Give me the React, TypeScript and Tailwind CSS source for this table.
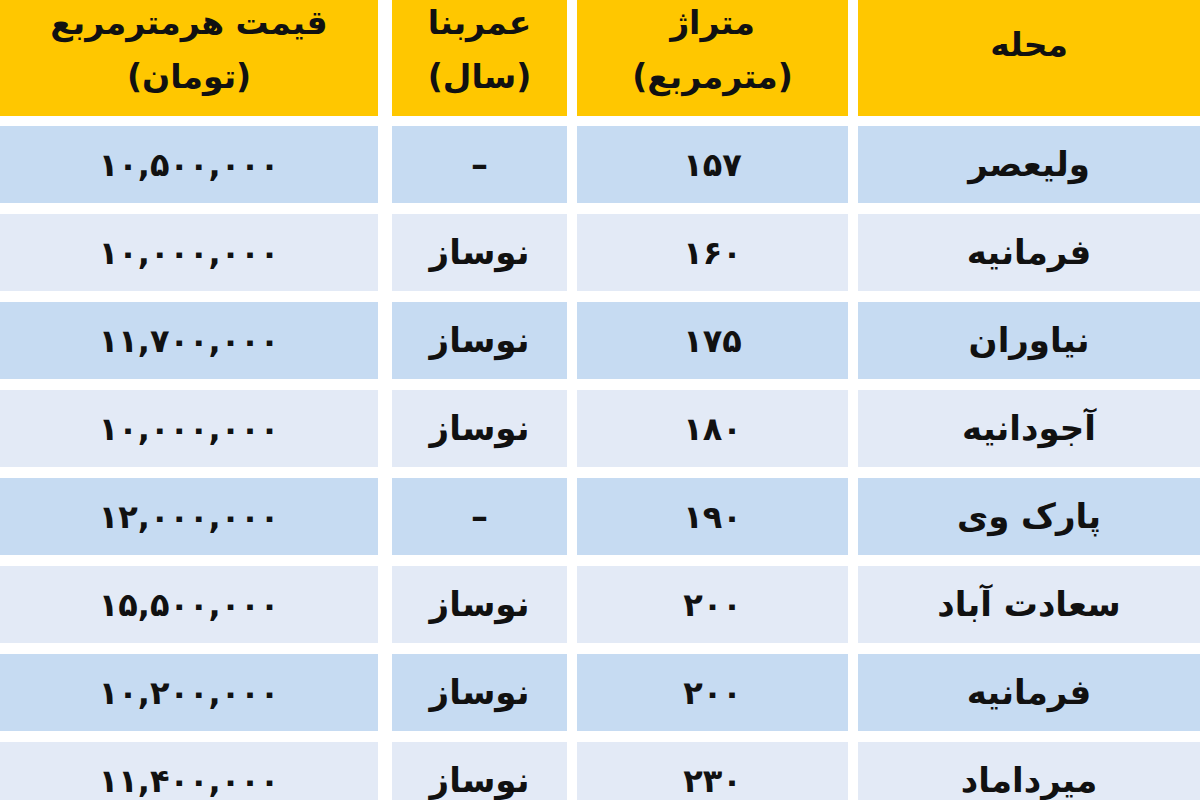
const rows = [
  { area: "ولیعصر", size: "۱۵۷", age: "–", price: "۱۰,۵۰۰,۰۰۰" },
  { area: "فرمانیه", size: "۱۶۰", age: "نوساز", price: "۱۰,۰۰۰,۰۰۰" },
  { area: "نیاوران", size: "۱۷۵", age: "نوساز", price: "۱۱,۷۰۰,۰۰۰" },
  { area: "آجودانیه", size: "۱۸۰", age: "نوساز", price: "۱۰,۰۰۰,۰۰۰" },
  { area: "پارک وی", size: "۱۹۰", age: "–", price: "۱۲,۰۰۰,۰۰۰" },
  { area: "سعادت آباد", size: "۲۰۰", age: "نوساز", price: "۱۵,۵۰۰,۰۰۰" },
  { area: "فرمانیه", size: "۲۰۰", age: "نوساز", price: "۱۰,۲۰۰,۰۰۰" },
  { area: "میرداماد", size: "۲۳۰", age: "نوساز", price: "۱۱,۴۰۰,۰۰۰" },
];

function HeaderCell({ lines, w, extra = "" }: { lines: string[]; w: string; extra?: string }) {
  return (
    <div className={`${w} ${extra} flex h-[116px] flex-col items-center bg-[#ffc700] leading-[54px]`}>
      {lines.map((l, i) => (
        <span key={i} className={lines.length === 1 ? "mt-[18px]" : i === 0 ? "-mt-[4px]" : ""}>
          {l}
        </span>
      ))}
    </div>
  );
}

export default function App() {
  return (
    <div
      dir="rtl"
      className="h-[800px] w-[1200px] overflow-hidden bg-white font-bold text-[#111]"
      style={{ fontFamily: '"DejaVu Sans", sans-serif' }}
    >
      {/* header */}
      <div className="flex gap-[10px] text-[33px]">
        <HeaderCell w="w-[342px]" lines={["محله"]} />
        <HeaderCell w="w-[271px]" lines={["متراژ", "(مترمربع)"]} />
        <HeaderCell w="w-[175px]" lines={["عمربنا", "(سال)"]} />
        <HeaderCell w="w-[378px]" extra="ms-[4px]" lines={["قیمت هرمترمربع", "(تومان)"]} />
      </div>

      <div className="mt-[10px] flex flex-col gap-[11px]">
        {rows.map((r, i) => {
          const bg = i % 2 === 0 ? "bg-[#c6dbf2]" : "bg-[#e3eaf6]";
          return (
            <div key={i} className="flex h-[77px] gap-[10px]">
              <div className={`${bg} flex w-[342px] items-center justify-center text-[34px]`}>{r.area}</div>
              <div className={`${bg} flex w-[271px] items-center justify-center text-[32px]`}>{r.size}</div>
              <div className={`${bg} flex w-[175px] items-center justify-center text-[34px]`}>{r.age}</div>
              <div className={`${bg} ms-[4px] flex w-[378px] items-center justify-center text-[32px]`}>{r.price}</div>
            </div>
          );
        })}
      </div>
    </div>
  );
}
